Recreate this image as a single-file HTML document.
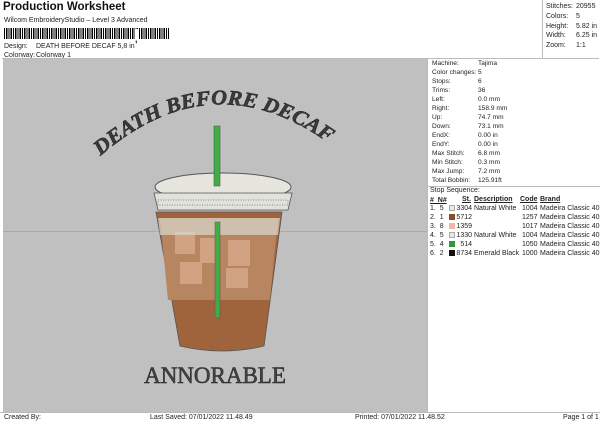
<!DOCTYPE html>
<html><head><style>
*{margin:0;padding:0;box-sizing:border-box}
body{width:600px;height:424px;background:#fff;font-family:"Liberation Sans",sans-serif;color:#222;position:relative;overflow:hidden;font-size:7px}
.a{position:absolute;white-space:nowrap}
.rp div{position:absolute;left:4px}
</style></head><body>
<div class="a" style="left:3px;top:1px;font-size:11.5px;font-weight:bold;color:#111">Production Worksheet</div>
<div class="a" style="left:4px;top:17px">Wilcom EmbroideryStudio – Level 3 Advanced</div>
<div class="a" style="left:4px;top:28px;width:165px;height:11px;background:repeating-linear-gradient(90deg,#000 0 1px,#fff 1px 2px,#000 2px 3.5px,#fff 3.5px 4.5px)"></div>
<div class="a" style="left:135px;top:29px;width:3px;height:11px;background:#fff"></div>
<div class="a" style="left:135px;top:34px;font-size:9px;font-weight:bold">,</div>
<div class="a" style="left:4px;top:43px">Design:</div><div class="a" style="left:36px;top:43px">DEATH BEFORE DECAF 5,8 in</div>
<div class="a" style="left:4px;top:52px">Colorway:</div><div class="a" style="left:36px;top:52px">Colorway 1</div>
<div class="a" style="left:542px;top:0;width:1px;height:59px;background:#bbb"></div>
<div class="a" style="left:546px;top:2px;line-height:9.8px">Stitches:<br>Colors:<br>Height:<br>Width:<br>Zoom:</div>
<div class="a" style="left:576px;top:2px;line-height:9.8px">20955<br>5<br>5.82 in<br>6.25 in<br>1:1</div>
<div class="a" style="left:2px;top:58px;width:597px;height:1px;background:#bbb"></div>
<div class="a" style="left:3px;top:59px;width:424px;height:354px;background:#c0c0c0"></div>
<div class="a" style="left:3px;top:231px;width:424px;height:1px;background:#aaa"></div>
<svg class="a" style="left:3px;top:59px" width="424" height="354" viewBox="3 59 424 354">
<defs><path id="arc" d="M98 158 Q215 55 338 150"/></defs>
<text font-family="Liberation Serif,serif" font-style="italic" font-weight="bold" font-size="21" fill="#3a3a3a" stroke="#222" stroke-width=".5" textLength="250" lengthAdjust="spacingAndGlyphs"><textPath href="#arc" startOffset="3">DEATH BEFORE DECAF</textPath></text>
<path d="M156 212 L282 212 L264 346 Q222 356 180 346 Z" fill="#a0643c" stroke="#555" stroke-width=".8"/>
<path d="M160 218 L278 218 L270 300 L168 300 Z" fill="#b7855f"/>
<rect x="175" y="232" width="20" height="22" fill="#d2a383"/><rect x="200" y="238" width="15" height="25" fill="#d2a383"/><rect x="180" y="262" width="22" height="22" fill="#d2a383"/><rect x="228" y="240" width="22" height="26" fill="#d2a383"/><rect x="226" y="268" width="22" height="20" fill="#d2a383"/>
<path d="M158 218 L280 218 L278 235 L160 235 Z" fill="#d8d8d0" opacity=".7"/>
<rect x="215" y="222" width="5" height="96" fill="#3fae44" stroke="#555" stroke-width=".5"/>
<ellipse cx="223" cy="187" rx="68" ry="14" fill="#e6e6df" stroke="#555"/>
<path d="M154 193 L292 193 L288 210 L158 210 Z" fill="#e2e2da" stroke="#555" stroke-width=".8"/>
<rect x="158" y="200" width="130" height="5" fill="none" stroke="#888" stroke-dasharray="1 1.5"/>
<rect x="214" y="126" width="6" height="60" fill="#3fae44" stroke="#555" stroke-width=".6"/>
<text x="215" y="383" text-anchor="middle" font-family="Liberation Serif,serif" font-size="23" fill="#444" stroke="#222" stroke-width=".5">ANNORABLE</text>
</svg>
<div class="a" style="left:427px;top:59px;width:1px;height:354px;background:#bbb"></div>
<div class="a rp" style="left:428px;top:59px;width:172px;height:200px;line-height:9px;font-size:6.6px">
<div style="top:0">Machine:<br>Color changes:<br>Stops:<br>Trims:<br>Left:<br>Right:<br>Up:<br>Down:<br>EndX:<br>EndY:<br>Max Stitch:<br>Min Stitch:<br>Max Jump:<br>Total Bobbin:</div>
<div style="left:50px;top:0">Tajima<br>5<br>6<br>36<br>0.0 mm<br>158.9 mm<br>74.7 mm<br>73.1 mm<br>0.00 in<br>0.00 in<br>6.8 mm<br>0.3 mm<br>7.2 mm<br>125.91ft</div>
</div>
<div class="a" style="left:428px;top:186px;width:172px;height:1px;background:#bbb"></div>
<div class="a" style="left:430px;top:187px">Stop Sequence:</div>
<div class="a" style="left:430px;top:196px;line-height:9px;font-weight:bold;text-decoration:underline">#&nbsp;&nbsp;N#</div>
<div class="a" style="left:462px;top:196px;font-weight:bold;text-decoration:underline">St.</div>
<div class="a" style="left:474px;top:196px;font-weight:bold;text-decoration:underline">Description</div>
<div class="a" style="left:520px;top:196px;font-weight:bold;text-decoration:underline">Code</div>
<div class="a" style="left:540px;top:196px;font-weight:bold;text-decoration:underline">Brand</div>
<div class="a" style="left:430px;top:204px;line-height:9px">1.&nbsp;&nbsp;5<br>2.&nbsp;&nbsp;1<br>3.&nbsp;&nbsp;8<br>4.&nbsp;&nbsp;5<br>5.&nbsp;&nbsp;4<br>6.&nbsp;&nbsp;2</div>
<div class="a" style="left:449px;top:205px;width:6px;height:6px;background:#e8e8e8;border:1px solid #aaa"></div>
<div class="a" style="left:449px;top:214px;width:6px;height:6px;background:#8b4a2a"></div>
<div class="a" style="left:449px;top:223px;width:6px;height:6px;background:#f0b8a8"></div>
<div class="a" style="left:449px;top:232px;width:6px;height:6px;background:#e8e8e8;border:1px solid #aaa"></div>
<div class="a" style="left:449px;top:241px;width:6px;height:6px;background:#2e9a36"></div>
<div class="a" style="left:449px;top:250px;width:6px;height:6px;background:#111"></div>
<div class="a" style="left:456px;top:204px;line-height:9px;text-align:right;width:16px">3304<br>5712<br>1359<br>1330<br>514<br>8734</div>
<div class="a" style="left:474px;top:204px;line-height:9px">Natural White<br><br><br>Natural White<br><br>Emerald Black</div>
<div class="a" style="left:522px;top:204px;line-height:9px">1004<br>1257<br>1017<br>1004<br>1050<br>1000</div>
<div class="a" style="left:540px;top:204px;line-height:9px">Madeira Classic 40<br>Madeira Classic 40<br>Madeira Classic 40<br>Madeira Classic 40<br>Madeira Classic 40<br>Madeira Classic 40</div>
<div class="a" style="left:0;top:412px;width:600px;height:1px;background:#bbb"></div>
<div class="a" style="left:4px;top:414px">Created By:</div>
<div class="a" style="left:150px;top:414px">Last Saved: 07/01/2022 11.48.49</div>
<div class="a" style="left:355px;top:414px">Printed: 07/01/2022 11.48.52</div>
<div class="a" style="left:563px;top:414px">Page 1 of 1</div>
</body></html>
